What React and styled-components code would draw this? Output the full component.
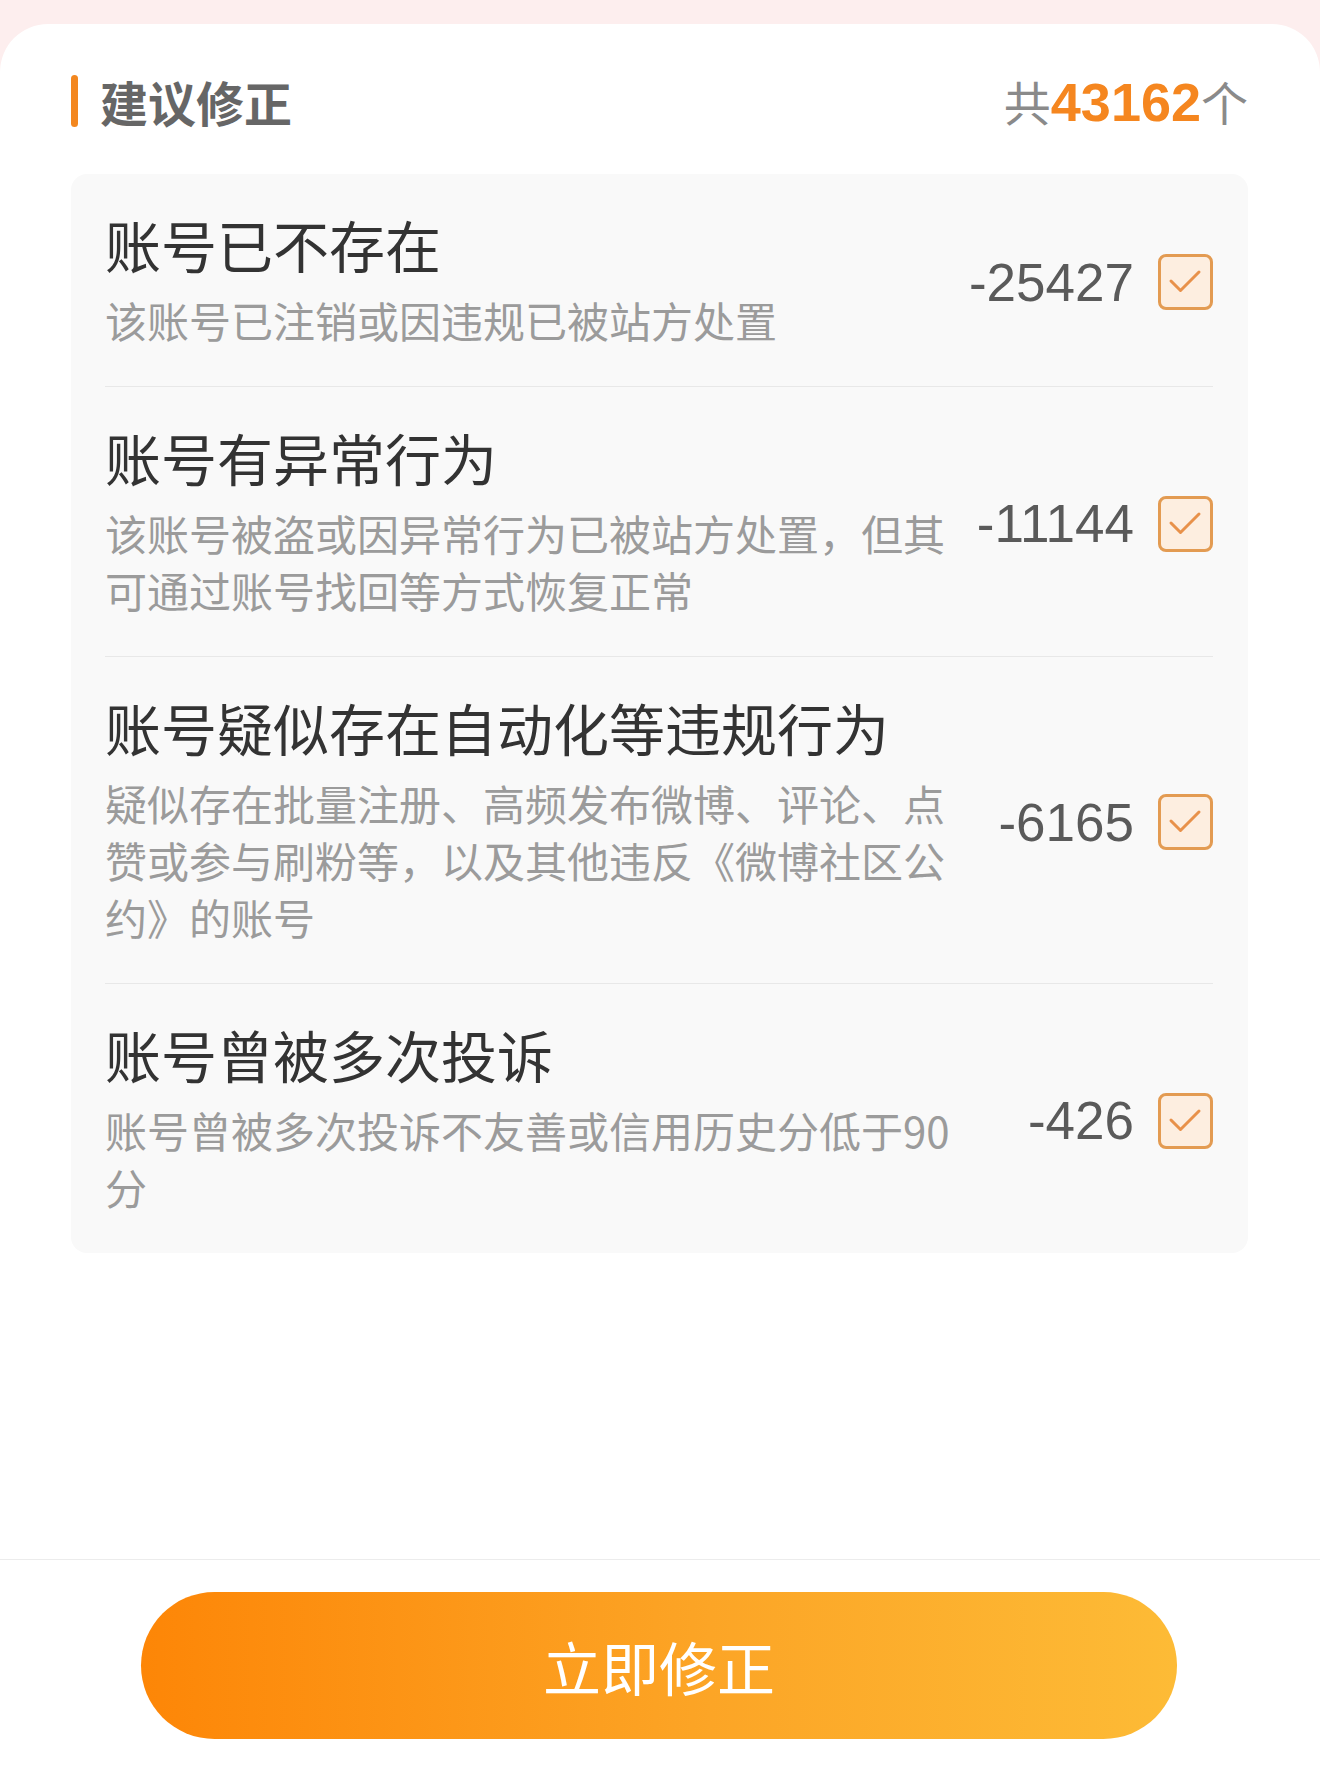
import React from "react"
import styled, { createGlobalStyle } from "styled-components"

const GlobalStyle = createGlobalStyle`
  html, body {
    margin: 0;
    padding: 0;
    background: #fdeeee;
  }
  body {
    font-family: "Noto Sans CJK SC", "Noto Sans", sans-serif;
  }
`

const Page = styled.div`
  padding-top: 24px;
`

const Sheet = styled.div`
  background: #fff;
  border-radius: 48px 48px 0 0;
  min-height: 1757px;
  display: flex;
  flex-direction: column;
`

const Content = styled.div`
  flex: 1;
  padding: 0 72px 0 71px;
`

const Header = styled.div`
  display: flex;
  align-items: center;
  justify-content: space-between;
  padding: 51px 0 47px;
  height: 52px;
`

const HeaderTitle = styled.h2`
  display: flex;
  align-items: center;
  margin: 0;
  font-size: 48px;
  font-weight: 700;
  color: #666;
  line-height: 52px;

  &::before {
    content: "";
    width: 7px;
    height: 52px;
    border-radius: 4px;
    background: #f3871f;
    margin-right: 22px;
  }
`

const Total = styled.div`
  font-size: 47px;
  color: #8a8a8a;
  line-height: 52px;

  b {
    font-family: "Liberation Sans", Arial, sans-serif;
    font-size: 54px;
    font-weight: 700;
    color: #f5861f;
  }
`

const Card = styled.div`
  background: #f9f9f9;
  border-radius: 16px;
  padding: 0 35px 0 34px;
`

const Row = styled.div`
  display: flex;
  align-items: center;
  padding: 37px 0 38px;
  border-top: ${(p) => (p.first ? "none" : "1px solid #e8e8e8")};
`

const Texts = styled.div`
  flex: 0 0 860px;
`

const Title = styled.div`
  font-size: 56px;
  line-height: 66px;
  color: #333;
`

const Desc = styled.div`
  margin-top: 14px;
  font-size: 42px;
  line-height: 57px;
  color: #9b9b9b;
`

const Side = styled.div`
  flex: 1;
  display: flex;
  align-items: center;
  justify-content: flex-end;
  gap: 24px;
  margin-top: 5px;
`

const Count = styled.span`
  font-family: "Liberation Sans", Arial, sans-serif;
  font-size: 53px;
  color: #5a5a5a;
`

const Check = styled.span`
  width: 49px;
  height: 50px;
  border: 3px solid #e39b52;
  border-radius: 8px;
  background: #fdeee0;
  display: flex;
  align-items: center;
  justify-content: center;
`

const Footer = styled.div`
  border-top: 1px solid #ececec;
  padding: 32px 143px 42px 141px;
`

const Button = styled.button`
  width: 100%;
  height: 147px;
  border: none;
  border-radius: 74px;
  background: linear-gradient(90deg, #fd8607 0%, #fca526 55%, #fdbb36 100%);
  color: #fff;
  font-family: "Noto Sans CJK SC", sans-serif;
  font-size: 58px;
  cursor: pointer;
`

const items = [
  {
    title: "账号已不存在",
    desc: "该账号已注销或因违规已被站方处置",
    count: -25427,
  },
  {
    title: "账号有异常行为",
    desc: "该账号被盗或因异常行为已被站方处置，但其可通过账号找回等方式恢复正常",
    count: -11144,
  },
  {
    title: "账号疑似存在自动化等违规行为",
    desc: "疑似存在批量注册、高频发布微博、评论、点赞或参与刷粉等，以及其他违反《微博社区公约》的账号",
    count: -6165,
  },
  {
    title: "账号曾被多次投诉",
    desc: "账号曾被多次投诉不友善或信用历史分低于90分",
    count: -426,
  },
]

const CheckIcon = () => (
  <svg width="49" height="50" viewBox="0 0 49 50">
    <path
      d="M10 24 L19.5 33.5 L38 15"
      fill="none"
      stroke="#e8914a"
      strokeWidth="3"
      strokeLinecap="round"
      strokeLinejoin="round"
    />
  </svg>
)

const App = () => (
  <Page>
    <GlobalStyle />
    <Sheet>
      <Content>
        <Header>
          <HeaderTitle>建议修正</HeaderTitle>
          <Total>
            共<b>43162</b>个
          </Total>
        </Header>
        <Card>
          {items.map((item, i) => (
            <Row key={item.title} first={i === 0}>
              <Texts>
                <Title>{item.title}</Title>
                <Desc>{item.desc}</Desc>
              </Texts>
              <Side>
                <Count>{item.count}</Count>
                <Check>
                  <CheckIcon />
                </Check>
              </Side>
            </Row>
          ))}
        </Card>
      </Content>
      <Footer>
        <Button>立即修正</Button>
      </Footer>
    </Sheet>
  </Page>
)

export default App
